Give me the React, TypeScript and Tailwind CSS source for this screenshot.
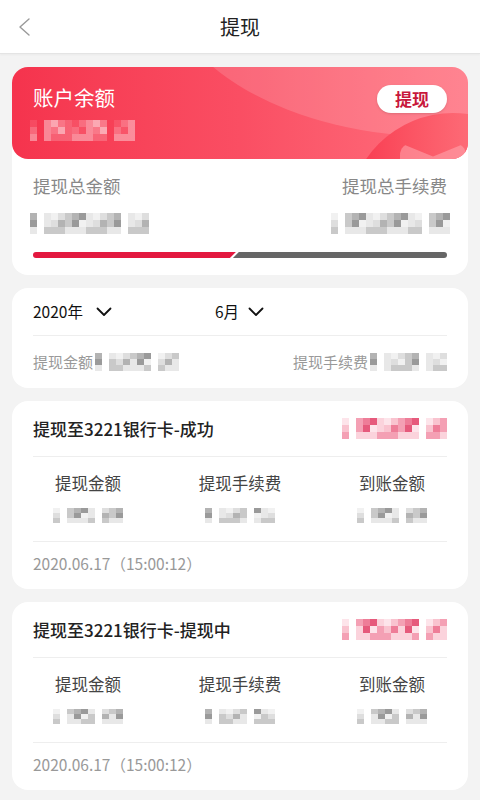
import React from 'react';

const FONT = "font-['Noto_Sans_CJK_SC','Noto_Sans',sans-serif]";

const GREY = ['bg-[#f1f1f1]', 'bg-[#dedede]', 'bg-[#c9c9c9]', 'bg-[#b3b3b3]', 'bg-[#9a9a9a]', 'bg-[#e8e8e8]'];
const PINK = ['bg-[#fde4ea]', 'bg-[#f9c3cf]', 'bg-[#f4a0b4]', 'bg-[#ee7d98]', 'bg-[#e65a7c]', 'bg-[#fbd3dc]'];
const LIGHT = ['bg-white/10', 'bg-white/25', 'bg-white/40', 'bg-white/55', 'bg-white/30', 'bg-white/20'];

// pixelated placeholder for the hidden amounts
const Mosaic: React.FC<{ cols: number; rows: number; seed: number; palette: string[]; cell?: string }> = ({
  cols,
  rows,
  seed,
  palette,
  cell = 'w-[7px] h-[7px]',
}) => {
  const cells = [];
  for (let r = 0; r < rows; r++) {
    for (let c = 0; c < cols; c++) {
      const n = (c * 7 + r * 13 + seed * 5 + ((c * r + seed) % 3)) % palette.length;
      const edge = c === 1 || c === cols - 4;
      cells.push(<div key={`${r}-${c}`} className={`${cell} ${edge ? 'opacity-0' : ''} ${palette[n]}`} />);
    }
  }
  return (
    <div className="grid w-fit" style={{ gridTemplateColumns: `repeat(${cols}, auto)` }}>
      {cells}
    </div>
  );
};

const Chevron = () => (
  <svg width="16" height="10" viewBox="0 0 16 10" fill="none">
    <path d="M1.5 1.5 L8 8 L14.5 1.5" stroke="#111" strokeWidth="1.8" strokeLinecap="round" strokeLinejoin="round" />
  </svg>
);

const Record: React.FC<{ status: string; seed: number }> = ({ status, seed }) => (
  <div className="bg-white rounded-2xl">
    <div className="mx-[21px] h-[56px] flex items-center justify-between border-b border-[#eeeeee]">
      <span className="text-[17px] font-medium text-[#222]">提现至3221银行卡-{status}</span>
      <Mosaic cols={15} rows={3} seed={seed} palette={PINK} />
    </div>
    <div className="grid grid-cols-3 h-[84px] pt-[14px]">
      {['提现金额', '提现手续费', '到账金额'].map((label, i) => (
        <div key={label} className="flex flex-col items-center">
          <span className="text-[16.5px] leading-[24px] text-[#444]">{label}</span>
          <div className="mt-[13px]">
            <Mosaic cols={10} rows={3} seed={seed + i * 3} palette={GREY} cell="w-[7px] h-[5px]" />
          </div>
        </div>
      ))}
    </div>
    <div className="mx-[21px] border-t border-[#eeeeee] h-[48px] pb-[4px] flex items-center">
      <span className="text-[15.5px] text-[#999]">2020.06.17（15:00:12）</span>
    </div>
  </div>
);

const App: React.FC = () => {
  return (
    <div className={`w-[480px] min-h-[800px] bg-[#f3f3f3] ${FONT}`}>
      <div className="relative h-[54px] bg-white flex items-center justify-center border-b border-[#e4e4e4] shadow-[0_1px_2px_rgba(0,0,0,0.04)]">
        <svg className="absolute left-[17px] top-[17px]" width="14" height="20" viewBox="0 0 14 20" fill="none">
          <path d="M12 2 L3 10 L12 18" stroke="#999" strokeWidth="1.4" strokeLinecap="round" strokeLinejoin="round" />
        </svg>
        <span className="text-[20px] text-[#222]">提现</span>
      </div>

      <div className="flex flex-col gap-[13px] px-[12px] pt-[13px] pb-[12px]">
        <div className="bg-white rounded-2xl">
          <div className="relative overflow-hidden rounded-2xl h-[92px] bg-gradient-to-r from-[#f5334d] via-[#fa4e63] to-[#ff6f7e] px-[21px] pt-[17px]">
            <div className="absolute left-[150px] -top-[260px] w-[560px] h-[330px] rounded-[50%] bg-white/15" />
            <div className="absolute left-[336px] top-[46px] w-[210px] h-[210px] rounded-full bg-gradient-to-r from-[#f8354e] to-[#ff8893]" />
            <div className="absolute left-[388px] top-[76px] w-[66px] h-[30px] rounded-t-[12px] bg-[#ffb0b8]/50 [clip-path:polygon(0_0,50%_45%,100%_0,100%_100%,0_100%)]" />
            <div className="relative flex justify-between items-start">
              <div>
                <div className="text-[20.5px] leading-[26px] text-white">账户余额</div>
                <div className="mt-[10px] ml-[-3px]">
                  <Mosaic cols={15} rows={3} seed={2} palette={LIGHT} />
                </div>
              </div>
              <button className="mt-[1px] w-[70px] h-[28px] rounded-full bg-white text-[17px] font-bold text-[#c8183c] flex items-center justify-center shadow-sm">
                提现
              </button>
            </div>
          </div>
          <div className="px-[21px] pt-[15px] pb-[17px]">
            <div className="flex justify-between text-[17.5px] leading-[24px] text-[#888]">
              <span>提现总金额</span>
              <span>提现总手续费</span>
            </div>
            <div className="flex justify-between mt-[15px] ml-[-3px] mr-[-3px]">
              <Mosaic cols={17} rows={3} seed={4} palette={GREY} />
              <Mosaic cols={17} rows={3} seed={7} palette={GREY} />
            </div>
            <div className="flex mt-[18px] h-[6px]">
              <div className="w-[49%] h-full rounded-l-full bg-[#e3183f] [clip-path:polygon(0_0,100%_0,calc(100%-6px)_100%,0_100%)]" />
              <div className="flex-1 h-full rounded-r-full bg-[#666666] ml-[-3px] [clip-path:polygon(6px_0,100%_0,100%_100%,0_100%)]" />
            </div>
          </div>
        </div>

        <div className="bg-white rounded-2xl px-[21px]">
          <div className="h-[48px] flex items-center border-b border-[#eeeeee] text-[15.5px] text-[#111]">
            <div className="w-[182px] flex items-center gap-[13px]">
              <span>2020年</span>
              <Chevron />
            </div>
            <div className="flex items-center gap-[9px]">
              <span>6月</span>
              <Chevron />
            </div>
          </div>
          <div className="h-[52px] flex items-center justify-between text-[15px] text-[#999]">
            <div className="flex items-center gap-[2px]">
              <span>提现金额</span>
              <Mosaic cols={12} rows={3} seed={3} palette={GREY} cell="w-[7px] h-[6px]" />
            </div>
            <div className="flex items-center gap-[2px]">
              <span>提现手续费</span>
              <Mosaic cols={11} rows={3} seed={5} palette={GREY} cell="w-[7px] h-[6px]" />
            </div>
          </div>
        </div>

        <Record status="成功" seed={1} />
        <Record status="提现中" seed={6} />
      </div>
    </div>
  );
};

export default App;
